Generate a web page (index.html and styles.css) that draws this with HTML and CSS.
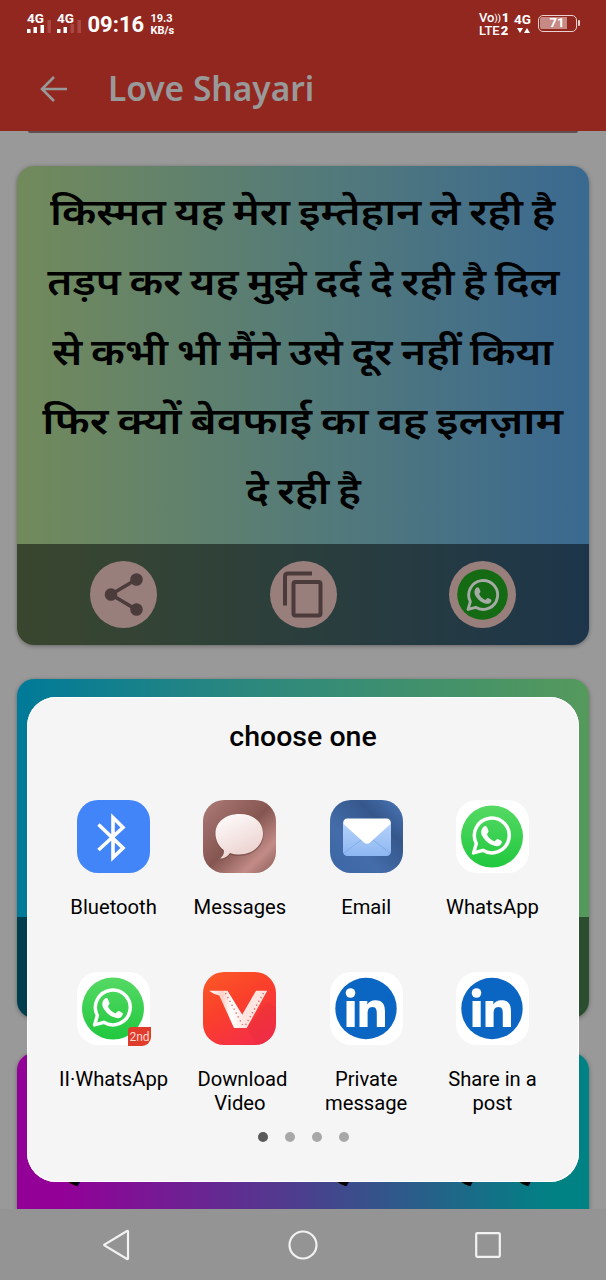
FILE: index.html
```
<!DOCTYPE html>
<html lang="hi">
<head>
<meta charset="utf-8">
<title>Love Shayari</title>
<link rel="stylesheet" href="styles.css">
</head>
<body>
<svg width="0" height="0" class="defs" aria-hidden="true">
  <defs>
    <linearGradient id="wa" x1="0" y1="0" x2="0" y2="1"><stop offset="0" stop-color="#55d964"/><stop offset="1" stop-color="#20c83e"/></linearGradient>
    <linearGradient id="msg" x1="0" y1="0" x2="1" y2="1"><stop offset="0" stop-color="#ad7d78"/><stop offset=".22" stop-color="#9c6a66"/><stop offset=".5" stop-color="#855651"/><stop offset=".78" stop-color="#c28b86"/><stop offset="1" stop-color="#8b5b57"/></linearGradient>
    <linearGradient id="bubble" x1="0" y1="0" x2=".5" y2="1"><stop offset="0" stop-color="#fff"/><stop offset="1" stop-color="#ecd3d0"/></linearGradient>
    <linearGradient id="mail" x1="0" y1="1" x2="1" y2="0"><stop offset="0" stop-color="#3b66a5"/><stop offset=".35" stop-color="#446ca9"/><stop offset=".7" stop-color="#35578c"/><stop offset="1" stop-color="#4a76b6"/></linearGradient>
    <linearGradient id="env" x1="0" y1="0" x2="0" y2="1"><stop offset="0" stop-color="#b9d5fb"/><stop offset="1" stop-color="#8eb8f2"/></linearGradient>
    <linearGradient id="vid" x1="0" y1="0" x2=".6" y2="1"><stop offset="0" stop-color="#fb5a26"/><stop offset=".5" stop-color="#fa402b"/><stop offset="1" stop-color="#f52f47"/></linearGradient>
    <linearGradient id="vleft" x1="0" y1="0" x2="1" y2="0"><stop offset="0" stop-color="#fff"/><stop offset=".35" stop-color="#ffd0c8"/><stop offset=".6" stop-color="#fff"/><stop offset="1" stop-color="#ffe0dc"/></linearGradient>
    <symbol id="phone" viewBox="0 0 40 40">
      <path d="M3 37 L5.7 27.8 A17 17 0 1 1 12 34.5 Z" fill="none" stroke="currentColor" stroke-width="3.4" stroke-linejoin="round"/>
      <path d="M12.7 11.6C13.8 10.4 15.4 10.6 16 11.8L17.6 15.5C18 16.5 16.2 18.1 16 18.7C17.5 22 20.4 24.6 23.5 25.8C24.3 25.4 25.3 23.7 26.1 23.5C26.8 23.4 29.6 24.8 30.4 25.5C31.2 26.3 29.7 29 28.4 29.8C26 31.1 22.9 30.2 20 28.9C16.5 27.3 13.4 23.9 11.5 20.6C9.8 17.5 10.3 13.6 12.7 11.6Z" fill="currentColor"/>
    </symbol>
    <symbol id="whatsapp" viewBox="0 0 73 73">
      <rect width="73" height="73" rx="21" fill="#fff"/><circle cx="36" cy="36.500" r="31" fill="url(#wa)"/>
      <use href="#phone" x="14.500" y="15" width="41" height="41" color="#fff"/>
    </symbol>
    <symbol id="linkedin" viewBox="0 0 73 73">
      <rect width="73" height="73" rx="21" fill="#fff"/><circle cx="36" cy="36.500" r="30.700" fill="#0b66c3"/>
      <circle cx="20.500" cy="21" r="4.800" fill="#fff"/>
      <path d="M16.500 29h8.200v26H16.500zM29.500 29h7.800v3.500c1.400-2.400 4.200-4.200 8-4.200 7.800 0 9.700 4.800 9.700 12V55h-8.200V42c0-3.500-.2-7-4.400-7-4 0-4.800 3.200-4.800 6.800V55H29.500z" fill="#fff"/>
    </symbol>
  </defs>
</svg>
<div class="screen">
  <header class="top">
    <div class="status">
      <div class="sig"><span>4G</span><svg width="25" height="9"><path d="M0 5h3.500v4H0zM6.500 3H10v6H6.500zM13.500 1H17v8h-3.500z" fill="#fff"/><path d="M20.500-4H24V9h-3.500z" fill="#a94842"/></svg></div>
      <div class="sig"><span>4G</span><svg width="25" height="9"><path d="M0 5h3.500v4H0zM6.500 3H10v6H6.500z" fill="#fff"/><path d="M13.500 0H17v9h-3.500zM20.500-4H24V9h-3.500z" fill="#a94842"/></svg></div>
      <div class="clock">09:16</div>
      <div class="speed">19.3<br>KB/s</div>
      <div class="volte"><span>Vo<small>))</small><b>1</b></span><span>LTE<b>2</b></span></div>
      <div class="data"><span>4G</span><svg width="13" height="7"><path d="M0 1h6L3 6zM7 6h6L10 1z" fill="#fff"/></svg></div>
      <div class="battery"><span>71</span></div>
    </div>
    <div class="toolbar">
      <svg width="28" height="28" viewBox="0 0 28 28"><path d="M28 14H3M15 2 3 14l12 12" fill="none" stroke="#999" stroke-width="2.600"/></svg>
      <h1>Love Shayari</h1>
    </div>
  </header>
  <main class="feed">
    <div class="prev"></div>
    <article class="card olive">
      <div class="poem">
        <p class="l1">किस्मत यह मेरा इम्तेहान ले रही है</p>
        <p class="l2">तड़प कर यह मुझे दर्द दे रही है दिल</p>
        <p class="l3">से कभी भी मैंने उसे दूर नहीं किया</p>
        <p class="l4">फिर क्यों बेवफाई का वह इलज़ाम</p>
        <p class="l5">दे रही है</p>
      </div>
      <div class="actions">
        <span class="round"><svg width="67" height="67"><path d="M47 18 21 33.500 47 49" fill="none" stroke="#4b3b3b" stroke-width="3.600"/><circle cx="46.500" cy="18.500" r="6.300" fill="#4b3b3b"/><circle cx="21" cy="33.500" r="6.300" fill="#4b3b3b"/><circle cx="46.500" cy="48.500" r="6.300" fill="#4b3b3b"/></svg></span>
        <span class="round"><svg width="67" height="67" fill="none" stroke="#4b3b3b" stroke-width="4"><path d="M42 12.500H18q-3 0-3 3V44.500"/><rect x="23.500" y="21" width="27" height="33.500" rx="2"/></svg></span>
        <span class="round"><svg width="67" height="67"><circle cx="33.500" cy="33.500" r="25.300" fill="#146b14"/><use href="#phone" x="16.500" y="17" width="34" height="34" color="#a5aaa5"/></svg></span>
      </div>
    </article>
    <article class="card teal"><div class="actions"></div></article>
    <article class="card purple">
      <svg class="line" width="572" height="156"><text y="126.500" x="47 96 199 316 411 440 498">हररहरहह</text></svg>
    </article>
  </main>
  <nav class="nav">
    <svg width="28" height="32"><path d="M26 2.500V29.500Q26 30.500 25 30L2.500 16.500Q2 16 2.500 15.500L25 2Q26 1.500 26 2.500Z"/></svg>
    <svg width="30" height="30"><circle cx="15" cy="15" r="13.500"/></svg>
    <svg width="26" height="26"><rect x="1.200" y="1.200" width="23.600" height="23.600" rx="1"/></svg>
  </nav>
  <section class="sheet">
    <h2>choose one</h2>
    <div class="apps">
      <div class="app"><svg viewBox="0 0 73 73"><rect width="73" height="73" rx="21" fill="#4285f8"/><path d="M21.500 24.500 46 48 36 57.500V17.500L46 27.500 21.500 50" fill="none" stroke="#fff" stroke-width="3.600"/></svg><span>Bluetooth</span></div>
      <div class="app"><svg viewBox="0 0 73 73"><rect width="73" height="73" rx="21" fill="url(#msg)"/><path d="M36.500 15.500C51 15.500 60.500 24 60.500 35S50.500 56 36.500 56C33 56 30 55.500 27 54.500 25 57.500 21.500 59.500 17 59.200 20 57.500 21.500 54.500 20.700 51.500 15.500 47.500 12.500 41.500 12.500 35 12.500 24 22 15.500 36.500 15.500Z" fill="#603733" opacity=".45"/><path d="M36.500 14C51 14 60 22.500 60 33.500S50.500 54.500 36.500 54.500C33 54.500 30 54 27 53 25 56.500 21.500 58.500 17 58.500 20 56.500 21.500 53.500 20.700 50 15.500 46 12.500 40 12.500 33.500 12.500 22.500 22 14 36.500 14Z" fill="url(#bubble)"/></svg><span>Messages</span></div>
      <div class="app"><svg viewBox="0 0 73 73"><rect width="73" height="73" rx="21" fill="url(#mail)"/><rect x="13" y="19" width="48" height="37" rx="4.500" fill="url(#env)"/><path d="M14 53 31 40M60 53 43 40" stroke="#79a5e4" stroke-width="1" opacity=".7"/><path d="M13.500 24Q13 18.500 17.500 18.500H56.500Q61 18.500 60.500 24L40 42.500Q37 45 34 42.500Z" fill="#fff"/></svg><span>Email</span></div>
      <div class="app"><svg><use href="#whatsapp" width="73" height="73"/></svg><span>WhatsApp</span></div>
      <div class="app"><div class="ic"><svg><use href="#whatsapp" width="73" height="73"/></svg><em>2nd</em></div><span>II·WhatsApp</span></div>
      <div class="app"><svg viewBox="0 0 73 73"><rect width="73" height="73" rx="21" fill="url(#vid)"/><path d="M44 56 64 30 73 36V52Q71 70 54 73Z" fill="#d92a35" opacity=".22"/><path d="M53 18.700H64.200L43.700 56H38L39 43Z" fill="#ffe4e0"/><path d="M6 18.700H24.500L41 45.500 43.700 56H31L16.300 23.500Q11 22.500 6 18.700Z" fill="url(#vleft)"/><path d="M22.500 21 39.500 53M60.500 21 42 54" fill="none" stroke="#e86a60" stroke-width="1.300" stroke-dasharray="1.400 3"/></svg><span>&nbsp;Download<br>Video</span></div>
      <div class="app"><svg><use href="#linkedin" width="73" height="73"/></svg><span>Private<br>message</span></div>
      <div class="app"><svg><use href="#linkedin" width="73" height="73"/></svg><span>Share in a<br>post</span></div>
    </div>
    <div class="dots"><i class="on"></i><i></i><i></i><i></i></div>
  </section>
</div>
</body>
</html>
```

FILE: styles.css
```
* { box-sizing: border-box; }
body { margin: 0; font-family: Roboto, "Noto Sans", sans-serif; }
.defs { position: absolute; }
.screen { position: relative; width: 606px; height: 1280px; display: flex; flex-direction: column; background: #999; overflow: hidden; }
.top { height: 131px; background: #922720; flex: none; }
.status { height: 47px; display: flex; padding: 12px 29px 0 27px; color: #fff; font-weight: 700; align-items: flex-start; }
.sig { width: 30px; font-size: 13.500px; line-height: 12px; display: flex; flex-direction: column; }
.sig svg { overflow: visible; }
.sig span { height: 12px; }
.clock { font-size: 22px; line-height: 25px; width: 63px; margin-left: 0.500px; }
.speed { font-size: 11px; line-height: 11.500px; margin-top: 1px; }
.volte { margin-left: auto; width: 35px; font-size: 13px; line-height: 11.500px; font-weight: 500; display: flex; flex-direction: column; }
.volte span { white-space: nowrap; }
.volte small { font-size: 9px; vertical-align: 1px; }
.volte b { font-weight: 900; margin-left: 1px; }
.data { width: 24px; font-size: 13.500px; line-height: 15px; display: flex; flex-direction: column; }
.data svg { margin: 0 0 0 3px; }
.battery { width: 39px; height: 17px; margin: 3px 0 0; border: 1.500px solid #e8d1cf; border-radius: 5px; font-size: 13px; line-height: 12px; text-align: center; padding: 1px 9px 1px 1px; position: relative; }
.battery span { display: block; background: #c78984; border-radius: 2px 0 0 2px; padding-left: 7px; }
.battery::after { content: ""; position: absolute; right: -4px; top: 4px; width: 2px; height: 6px; background: #e8d1cf; border-radius: 1px; }
.toolbar { height: 84px; display: flex; align-items: center; padding-left: 39px; gap: 41px; }
h1 { margin: 0; padding-bottom: 2px; font: 600 33.500px/40px "Noto Sans", sans-serif; color: #999; white-space: nowrap; }
.feed { height: 1078px; flex: none; padding: 0 17px; display: flex; flex-direction: column; overflow: hidden; }
.prev { height: 1.500px; margin: 0 11px 33.500px; background: #60504f; border-radius: 0 0 4px 4px; flex: none; }
.card { flex: none; border-radius: 17px; overflow: hidden; box-shadow: 0 1px 4px rgba(0,0,0,.35); display: flex; flex-direction: column; justify-content: flex-end; }
.olive { height: 479px; background: linear-gradient(90deg, #728a5b, #557b78 50%, #3a6991); }
.teal { height: 339px; margin-top: 34px; background: linear-gradient(90deg, #007a99, #2a877f 38%, #55995c); }
.purple { height: 200px; margin-top: 35px; background: linear-gradient(90deg, #930098 8%, #008284 94%); justify-content: flex-start; }
.line { font: 700 38px "Noto Sans", "Noto Sans Devanagari", sans-serif; }
.poem { height: 378px; padding-top: 10px; display: flex; flex-direction: column; align-items: center; }
.poem p { margin: 0; height: 69.750px; font: 600 37px/69.750px "Noto Sans", "Noto Sans Devanagari", sans-serif; word-spacing: -2px; white-space: nowrap; color: #000; }
/* Each line is stretched to its measure */
.poem .l1 { transform: scaleX(1.150); }
.poem .l2 { transform: scaleX(1.131); }
.poem .l3 { transform: scaleX(1.135); }
.poem .l4 { transform: scaleX(1.180); }
.poem .l5 { transform: scaleX(1.117); }
.actions { height: 101px; background: rgba(0,0,0,.49); display: flex; align-items: center; justify-content: space-between; padding: 0 73px; }
.round { width: 67px; height: 67px; border-radius: 50%; background: #997f7c; }
.round svg { display: block; }
.nav { height: 71px; background: #949494; display: flex; align-items: center; padding: 0 105px 0 102px; justify-content: space-between; }
.nav svg { fill: none; stroke: #f2f2f2; stroke-width: 2.200; }
.sheet { position: absolute; left: 27px; top: 697px; width: 552px; height: 485px; background: #f5f5f5; border-radius: 29px; box-shadow: inset 0 0 0 1px #fff; }
h2 { margin: 0; padding-top: 23px; font-size: 28.500px; line-height: 34px; font-weight: 500; text-align: center; color: #000; height: 103px; }
.apps { display: grid; grid-template-columns: repeat(4, 126.300px); grid-auto-rows: 172px; justify-content: center; }
.app { display: flex; flex-direction: column; align-items: center; gap: 22px; font-size: 20.200px; line-height: 24px; color: #000; text-align: center; white-space: nowrap; }
.app svg { display: block; width: 73px; height: 73px; }
.ic { position: relative; height: 73px; }
.ic em { position: absolute; right: -1px; bottom: -1px; width: 23px; height: 19px; background: #e03c2c; color: #ffd8d0; font: 12px/20px Roboto, sans-serif; border-radius: 4px 0 9px 0; }
.dots { display: flex; justify-content: center; gap: 17px; margin-top: -12px; }
.dots i { width: 10px; height: 10px; border-radius: 50%; background: #a8a8a8; }
.dots .on { background: #5a5a5a; }
```
